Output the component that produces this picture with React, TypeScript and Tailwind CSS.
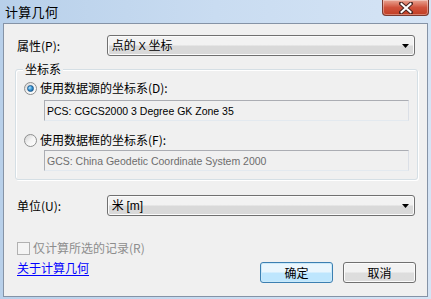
import React from "react";

function Radio({ checked }: { checked: boolean }) {
  return (
    <div className="w-[13px] h-[13px] rounded-full border border-[#8e8f8f] bg-gradient-to-br from-[#d2d2d2] via-[#f4f4f4] to-[#ffffff] flex items-center justify-center shrink-0">
      {checked && (
        <div className="w-[7px] h-[7px] rounded-full bg-[radial-gradient(circle_at_35%_35%,#b8e3fb_0%,#3a9ad8_45%,#0f4f8a_100%)] border border-[#1d5b90]" />
      )}
    </div>
  );
}

function Combo({ text }: { text: React.ReactNode }) {
  return (
    <div className="w-[309px] h-[21px] rounded-[3px] border border-[#707070] bg-gradient-to-b from-[#f2f2f2] from-45% to-[#d9d9d9] to-55% flex items-center pl-[4px] pr-[5px] shadow-[inset_0_0_0_1px_#fbfbfb]">
      <div className="flex-1 text-[12px] leading-[14px] text-black">{text}</div>
      <svg width="7" height="4" viewBox="0 0 7 4">
        <path d="M0 0H7L3.5 4Z" fill="#000" />
      </svg>
    </div>
  );
}

export default function App() {
  return (
    <div className="w-[431px] h-[299px] relative overflow-hidden bg-gradient-to-r from-[#b8d0ea] via-[#c9dcf1] to-[#d5e4f5] font-['Noto_Sans_CJK_SC',sans-serif]">
      {/* title bar */}
      <div className="h-[23px] flex items-center pl-[5px]">
        <span className="text-[13px] leading-[15px] text-black tracking-[0.3px]">计算几何</span>
      </div>
      {/* close button */}
      <div className="absolute top-0 left-[382px] w-[47px] h-[16px] rounded-b-[4px] border border-t-0 border-[#7a3a30] bg-gradient-to-b from-[#e8a493] from-0% via-[#d0523c] via-50% to-[#c13d22] flex items-center justify-center shadow-[inset_0_0_0_1px_rgba(255,255,255,0.35)]">
        <svg width="14" height="12" viewBox="0 0 14 12">
          <path d="M2 1.5L12 10.5M12 1.5L2 10.5" stroke="#4a2420" strokeWidth="4" strokeLinecap="square" />
          <path d="M2.5 2L11.5 10M11.5 2L2.5 10" stroke="#ffffff" strokeWidth="2" strokeLinecap="square" />
        </svg>
      </div>
      {/* client */}
      <div className="mx-[3px] h-[274px] border border-[#8593a6] bg-[#f0f0f0] flex flex-col px-[12px] text-[12px] leading-[14px] text-black">
        {/* row 1 */}
        <div className="mt-[11px] flex items-center">
          <div className="w-[91px] pl-[1px]">属性(P):</div>
          <Combo text={<span>点的 <span className="font-['Liberation_Sans',sans-serif] text-[11px]">X</span> 坐标</span>} />
        </div>
        {/* group */}
        <div className="relative mt-[13px] ml-[-1px] w-[403px] h-[111px] rounded-[3px] border border-[#d5dfe5] shadow-[inset_1px_1px_0_#ffffff,1px_1px_0_#ffffff]">
          <div className="absolute left-[7px] top-[-8px] px-[2px] bg-[#f0f0f0] text-[12px] leading-[14px]">坐标系</div>
          <div className="flex items-center mt-[11px] ml-[8px] gap-[3px]">
            <Radio checked />
            <span>使用数据源的坐标系(D):</span>
          </div>
          <div className="mt-[5px] ml-[28px] w-[365px] h-[21px] border border-[#abadb3] border-b-[#e3e9ef] border-r-[#dbdfe6] bg-[#f0f0f0] flex items-center pl-[2px] font-['Liberation_Sans',sans-serif] text-[10.5px] text-black">
            PCS: CGCS2000 3 Degree GK Zone 35
          </div>
          <div className="flex items-center mt-[12px] ml-[8px] gap-[3px]">
            <Radio checked={false} />
            <span>使用数据框的坐标系(F):</span>
          </div>
          <div className="mt-[3px] ml-[28px] w-[365px] h-[21px] border border-[#abadb3] border-b-[#e3e9ef] border-r-[#dbdfe6] bg-[#f0f0f0] flex items-center pl-[2px] font-['Liberation_Sans',sans-serif] text-[10.5px] text-[#6d6d6d]">
            GCS: China Geodetic Coordinate System 2000
          </div>
        </div>
        {/* unit */}
        <div className="mt-[15px] flex items-center">
          <div className="w-[91px] pl-[1px]">单位(U):</div>
          <Combo text={<span>米 <span className="font-['Liberation_Sans',sans-serif]">[m]</span></span>} />
        </div>
        {/* checkbox */}
        <div className="mt-[25px] flex items-center gap-[3px] pl-[1px] text-[#8d8d8d]">
          <div className="w-[13px] h-[13px] border border-[#b1b1b1] bg-[#f4f4f4]" />
          <span>仅计算所选的记录(R)</span>
        </div>
        {/* bottom */}
        <div className="mt-[6px] flex items-start">
          <a className="pl-[1px] text-[#0000ff] underline underline-offset-[2px] cursor-pointer">关于计算几何</a>
          <div className="ml-auto flex gap-[10px] mr-[-1px] mt-[1px]">
            <div className="w-[73px] h-[21px] rounded-[3px] border border-[#3c7fb1] bg-gradient-to-b from-[#eaf6fd] from-45% to-[#bee6fd] to-55% shadow-[inset_0_0_0_1px_#cbe9f9] flex items-center justify-center">确定</div>
            <div className="w-[73px] h-[21px] rounded-[3px] border border-[#707070] bg-gradient-to-b from-[#f2f2f2] from-45% to-[#dddddd] to-55% shadow-[inset_0_0_0_1px_#fbfbfb] flex items-center justify-center">取消</div>
          </div>
        </div>
      </div>
    </div>
  );
}
